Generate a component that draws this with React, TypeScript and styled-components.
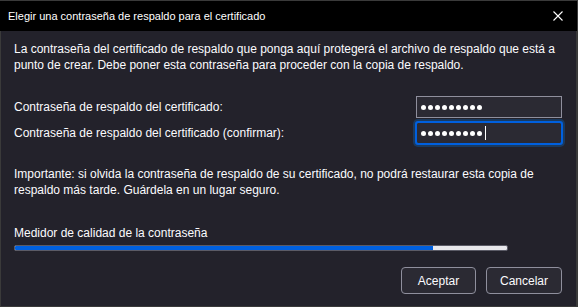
import React from "react";
import styled, { createGlobalStyle } from "styled-components";

const Global = createGlobalStyle`
  html, body { margin: 0; padding: 0; background: #23222b; }
  body { font-family: "Segoe UI", "Liberation Sans", "Noto Sans", sans-serif; }
  * { box-sizing: border-box; }
`;

const Window = styled.div`
  width: 578px;
  height: 307px;
  border: 1px solid #3a3a3a;
  border-right-width: 2px;
  border-top: none;
  background: #23222b;
  color: #fbfbfe;
  display: flex;
  flex-direction: column;
  font-size: 12px;
`;

const TitleBar = styled.div`
  height: 31px;
  background: #000;
  display: flex;
  align-items: center;
  justify-content: space-between;
  border-top: 1px solid #3a3a3a;
  margin: 0 -1px;
  padding: 0 8px 0 8px;
`;

const Title = styled.span`
  font-size: 11px;
  color: #fff;
`;

const Close = styled.svg`
  width: 10px;
  height: 10px;
  margin-right: 6px;
`;

const Body = styled.div`
  flex: 1;
  display: flex;
  flex-direction: column;
  padding: 10px 14px 0 13px;
`;

const Paragraph = styled.p<{ $mt?: number }>`
  margin: ${(p) => p.$mt ?? 0}px 0 0;
  line-height: 16px;
`;

const Form = styled.div`
  margin-top: 23px;
  display: flex;
  flex-direction: column;
  gap: 4px;
`;

const Row = styled.div`
  display: flex;
  align-items: center;
  justify-content: space-between;
`;

const Label = styled.label``;

const Field = styled.div<{ $focused?: boolean }>`
  width: 146px;
  height: 22px;
  background: #2b2a33;
  border: 1px solid ${(p) => (p.$focused ? "#0060df" : "#8f8f9d")};
  ${(p) =>
    p.$focused
      ? `outline: 2px solid #0060df; outline-offset: -1px; box-shadow: 0 0 0 3px #1b3a5e; border-radius: 2px;`
      : ""}
  display: flex;
  align-items: center;
  padding-left: 4px;
  gap: 2px;
`;

const Dot = styled.span`
  width: 5px;
  height: 5px;
  border-radius: 50%;
  background: #fff;
`;

const Caret = styled.span`
  width: 1px;
  height: 14px;
  background: #fff;
  margin-left: 1px;
`;

const MeterLabel = styled.div`
  margin-top: 27px;
  line-height: 16px;
`;

const Meter = styled.div`
  margin-top: 4px;
  height: 6px;
  width: 494px;
  background: #e8e8ec;
  border-radius: 2px;
  overflow: hidden;
  border: 1px solid #5b5b66;
`;

const MeterFill = styled.div`
  height: 100%;
  background: #0060df;
`;

const Buttons = styled.div`
  margin-top: 16px;
  display: flex;
  justify-content: flex-end;
  gap: 10px;
`;

const Button = styled.button<{ $w: number }>`
  width: ${(p) => p.$w}px;
  height: 27px;
  background: #2b2a33;
  color: #fbfbfe;
  border: 1px solid #8f8f9d;
  border-radius: 4px;
  font: inherit;
  font-size: 12px;
`;

const Dots = ({ n }: { n: number }) => (
  <>
    {Array.from({ length: n }).map((_, i) => (
      <Dot key={i} />
    ))}
  </>
);

export default function App() {
  const quality = 85;
  return (
    <>
      <Global />
      <Window>
        <TitleBar>
          <Title>Elegir una contraseña de respaldo para el certificado</Title>
          <Close viewBox="0 0 10 10">
            <path d="M0.5 0.5 L9.5 9.5 M9.5 0.5 L0.5 9.5" stroke="#fff" strokeWidth="1.1" />
          </Close>
        </TitleBar>
        <Body>
          <Paragraph>
            La contraseña del certificado de respaldo que ponga aquí protegerá el archivo de respaldo que está a
            punto de crear. Debe poner esta contraseña para proceder con la copia de respaldo.
          </Paragraph>
          <Form>
            <Row>
              <Label>Contraseña de respaldo del certificado:</Label>
              <Field>
                <Dots n={9} />
              </Field>
            </Row>
            <Row>
              <Label>Contraseña de respaldo del certificado (confirmar):</Label>
              <Field $focused>
                <Dots n={9} />
                <Caret />
              </Field>
            </Row>
          </Form>
          <Paragraph $mt={22}>
            Importante: si olvida la contraseña de respaldo de su certificado, no podrá restaurar esta copia de
            respaldo más tarde. Guárdela en un lugar seguro.
          </Paragraph>
          <MeterLabel>Medidor de calidad de la contraseña</MeterLabel>
          <Meter>
            <MeterFill style={{ width: `${quality}%` }} />
          </Meter>
          <Buttons>
            <Button $w={75}>Aceptar</Button>
            <Button $w={76}>Cancelar</Button>
          </Buttons>
        </Body>
      </Window>
    </>
  );
}
